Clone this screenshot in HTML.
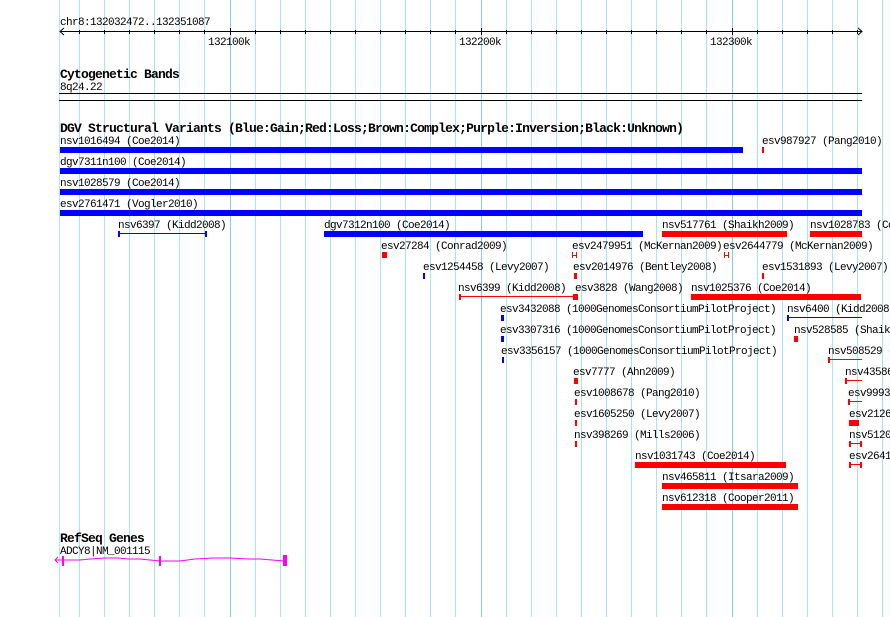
<!DOCTYPE html>
<html><head><meta charset="utf-8"><style>
html,body{margin:0;padding:0;background:#fff;width:890px;height:617px;overflow:hidden}
svg{display:block}
text{font-family:"Liberation Mono",monospace;font-size:11px;letter-spacing:-0.6px;fill:#000}
.b{font-weight:bold;font-size:13px;letter-spacing:-0.8px}
</style></head><body>
<svg width="890" height="617" viewBox="0 0 890 617" xmlns="http://www.w3.org/2000/svg" shape-rendering="crispEdges">
<line x1="59.5" y1="0" x2="59.5" y2="617" stroke="#b0e8ee"/>
<g stroke="#a8e6ee">
<line x1="79.5" y1="0" x2="79.5" y2="617"/><line x1="104.5" y1="0" x2="104.5" y2="617"/><line x1="129.5" y1="0" x2="129.5" y2="617"/><line x1="154.5" y1="0" x2="154.5" y2="617"/><line x1="179.5" y1="0" x2="179.5" y2="617"/><line x1="204.5" y1="0" x2="204.5" y2="617"/><line x1="230.5" y1="0" x2="230.5" y2="617" stroke="#88cce6"/><line x1="255.5" y1="0" x2="255.5" y2="617"/><line x1="280.5" y1="0" x2="280.5" y2="617"/><line x1="305.5" y1="0" x2="305.5" y2="617"/><line x1="330.5" y1="0" x2="330.5" y2="617"/><line x1="355.5" y1="0" x2="355.5" y2="617"/><line x1="380.5" y1="0" x2="380.5" y2="617"/><line x1="405.5" y1="0" x2="405.5" y2="617"/><line x1="430.5" y1="0" x2="430.5" y2="617"/><line x1="455.5" y1="0" x2="455.5" y2="617"/><line x1="481.5" y1="0" x2="481.5" y2="617" stroke="#88cce6"/><line x1="506.5" y1="0" x2="506.5" y2="617"/><line x1="531.5" y1="0" x2="531.5" y2="617"/><line x1="556.5" y1="0" x2="556.5" y2="617"/><line x1="581.5" y1="0" x2="581.5" y2="617"/><line x1="606.5" y1="0" x2="606.5" y2="617"/><line x1="631.5" y1="0" x2="631.5" y2="617"/><line x1="656.5" y1="0" x2="656.5" y2="617"/><line x1="681.5" y1="0" x2="681.5" y2="617"/><line x1="706.5" y1="0" x2="706.5" y2="617"/><line x1="732.5" y1="0" x2="732.5" y2="617" stroke="#88cce6"/><line x1="757.5" y1="0" x2="757.5" y2="617"/><line x1="782.5" y1="0" x2="782.5" y2="617"/><line x1="807.5" y1="0" x2="807.5" y2="617"/><line x1="832.5" y1="0" x2="832.5" y2="617"/><line x1="857.5" y1="0" x2="857.5" y2="617"/><line x1="882.5" y1="0" x2="882.5" y2="617"/>
</g>
<text x="60" y="25">chr8:132032472..132351087</text>
<g stroke="#000">
<line x1="60" y1="31.5" x2="862" y2="31.5"/>
<polyline points="64,28 60,31.5 64,35" fill="none" shape-rendering="auto"/>
<polyline points="858,28 862,31.5 858,35" fill="none" shape-rendering="auto"/>
<path d="M79.5 30v4M104.5 30v4M129.5 30v4M154.5 30v4M179.5 30v4M204.5 30v4M230.5 28v7M255.5 30v4M280.5 30v4M305.5 30v4M330.5 30v4M355.5 30v4M380.5 30v4M405.5 30v4M430.5 30v4M455.5 30v4M481.5 28v7M506.5 30v4M531.5 30v4M556.5 30v4M581.5 30v4M606.5 30v4M631.5 30v4M656.5 30v4M681.5 30v4M706.5 30v4M732.5 28v7M757.5 30v4M782.5 30v4M807.5 30v4M832.5 30v4M857.5 30v4"/>
</g>
<text x="208" y="45">132100k</text>
<text x="459" y="45">132200k</text>
<text x="710" y="45">132300k</text>
<text class="b" x="60" y="78">Cytogenetic Bands</text>
<text x="60" y="90">8q24.22</text>
<rect x="59" y="93" width="803" height="1" fill="#000"/>
<rect x="59" y="100" width="803" height="1" fill="#000"/>
<text class="b" x="60" y="132">DGV Structural Variants (Blue:Gain;Red:Loss;Brown:Complex;Purple:Inversion;Black:Unknown)</text>
<g fill="#0000ff">
<rect x="60" y="147" width="683" height="6"/>
<rect x="60" y="168" width="802" height="6"/>
<rect x="60" y="189" width="802" height="6"/>
<rect x="60" y="210" width="802" height="6"/>
<rect x="324" y="231" width="319" height="6"/>
<rect x="118" y="233" width="88" height="1"/><rect x="118" y="231" width="2" height="6"/><rect x="205" y="231" width="2" height="6"/>
<rect x="423" y="273" width="2" height="6"/>
<rect x="501" y="315" width="3" height="6"/>
<rect x="501" y="336" width="3" height="6"/>
<rect x="502" y="357" width="2" height="6"/>
<rect x="787" y="317" width="75" height="1"/><rect x="787" y="315" width="2" height="6"/>
</g>
<g fill="#ff0000">
<rect x="762" y="147" width="2" height="6"/>
<rect x="662" y="231" width="125" height="6"/>
<rect x="810" y="231" width="52" height="6"/>
<rect x="382" y="252" width="5" height="6"/>
<rect x="572" y="252" width="1" height="6"/><rect x="576" y="252" width="1" height="6"/><rect x="572" y="255" width="5" height="1"/>
<rect x="724" y="252" width="1" height="6"/><rect x="728" y="252" width="1" height="6"/><rect x="724" y="255" width="5" height="1"/>
<rect x="574" y="273" width="3" height="6"/>
<rect x="762" y="273" width="2" height="6"/>
<rect x="459" y="296" width="117" height="1"/><rect x="459" y="294" width="2" height="6"/><rect x="573" y="294" width="5" height="6"/>
<rect x="691" y="294" width="170" height="6"/>
<rect x="794" y="336" width="4" height="6"/>
<rect x="828" y="359" width="34" height="1"/><rect x="828" y="357" width="2" height="6"/>
<rect x="574" y="378" width="4" height="6"/>
<rect x="845" y="380" width="17" height="1"/><rect x="845" y="378" width="2" height="6"/>
<rect x="575" y="399" width="2" height="6"/>
<rect x="848" y="401" width="14" height="1"/><rect x="848" y="399" width="2" height="6"/>
<rect x="575" y="420" width="2" height="6"/>
<rect x="849" y="420" width="10" height="6"/>
<rect x="575" y="441" width="2" height="6"/>
<rect x="849" y="443" width="13" height="1"/><rect x="849" y="441" width="2" height="6"/><rect x="860" y="441" width="2" height="6"/>
<rect x="635" y="462" width="151" height="6"/>
<rect x="849" y="464" width="13" height="1"/><rect x="849" y="462" width="2" height="6"/><rect x="860" y="462" width="2" height="6"/>
<rect x="662" y="483" width="136" height="6"/>
<rect x="662" y="504" width="136" height="6"/>
</g>
<text x="60" y="144">nsv1016494 (Coe2014)</text>
<text x="762" y="144">esv987927 (Pang2010)</text>
<text x="60" y="165">dgv7311n100 (Coe2014)</text>
<text x="60" y="186">nsv1028579 (Coe2014)</text>
<text x="60" y="207">esv2761471 (Vogler2010)</text>
<text x="118" y="228">nsv6397 (Kidd2008)</text>
<text x="324" y="228">dgv7312n100 (Coe2014)</text>
<text x="662" y="228">nsv517761 (Shaikh2009)</text>
<text x="810" y="228">nsv1028783 (Coe2014)</text>
<text x="381" y="249">esv27284 (Conrad2009)</text>
<text x="572" y="249">esv2479951 (McKernan2009)</text>
<text x="723" y="249">esv2644779 (McKernan2009)</text>
<text x="423" y="270">esv1254458 (Levy2007)</text>
<text x="573" y="270">esv2014976 (Bentley2008)</text>
<text x="762" y="270">esv1531893 (Levy2007)</text>
<text x="458" y="291">nsv6399 (Kidd2008)</text>
<text x="575" y="291">esv3828 (Wang2008)</text>
<text x="691" y="291">nsv1025376 (Coe2014)</text>
<text x="500" y="312">esv3432088 (1000GenomesConsortiumPilotProject)</text>
<text x="787" y="312">nsv6400 (Kidd2008)</text>
<text x="500" y="333">esv3307316 (1000GenomesConsortiumPilotProject)</text>
<text x="794" y="333">nsv528585 (Shaikh2009)</text>
<text x="501" y="354">esv3356157 (1000GenomesConsortiumPilotProject)</text>
<text x="828" y="354">nsv508529 (</text>
<text x="573" y="375">esv7777 (Ahn2009)</text>
<text x="845" y="375">nsv43586</text>
<text x="574" y="396">esv1008678 (Pang2010)</text>
<text x="848" y="396">esv9993</text>
<text x="574" y="417">esv1605250 (Levy2007)</text>
<text x="849" y="417">esv2126</text>
<text x="574" y="438">nsv398269 (Mills2006)</text>
<text x="849" y="438">nsv5120</text>
<text x="635" y="459">nsv1031743 (Coe2014)</text>
<text x="849" y="459">esv2641</text>
<text x="662" y="480">nsv465811 (Itsara2009)</text>
<text x="662" y="501">nsv612318 (Cooper2011)</text>
<text class="b" x="60" y="542">RefSeq Genes</text>
<text x="60" y="554">ADCY8|NM_001115</text>
<g stroke="#ff00ff" fill="none" shape-rendering="auto">
<polyline points="58,557 55,560 58,563"/>
<line x1="55" y1="560" x2="62" y2="560"/>
<polyline points="63,560 80,560 90,559 104,558 118,558 128,559 140,559 150,560 160,561"/>
<polyline points="161,561 180,561 195,559 213,558 230,558 248,559 260,559 272,560 284,561"/>
</g>
<g fill="#ff00ff">
<rect x="62" y="556" width="2" height="10"/>
<rect x="159" y="556" width="2" height="10"/>
<rect x="283" y="555" width="4" height="11"/>
</g>
</svg>
</body></html>
